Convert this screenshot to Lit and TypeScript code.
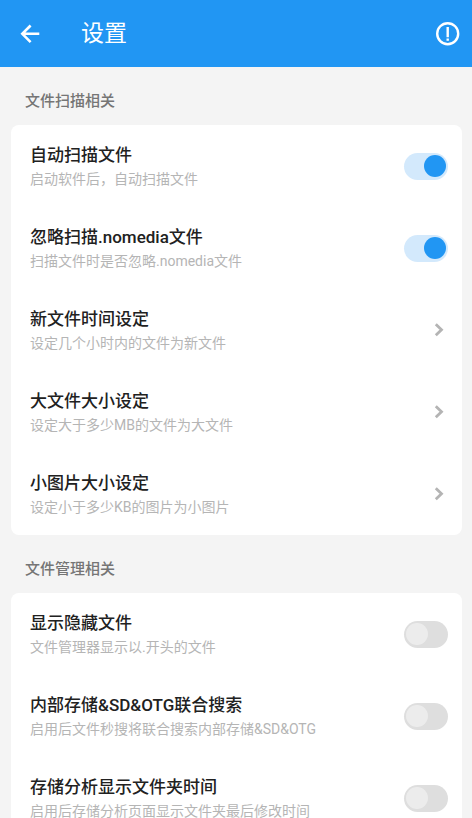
import { LitElement, html, css } from "lit";
import { customElement, property, state } from "lit/decorators.js";

interface Setting {
  id: string;
  title: string;
  hint: string;
  on?: boolean;
}

interface Section {
  heading: string;
  items: Setting[];
}

const initialSections: Section[] = [
  {
    heading: "文件扫描相关",
    items: [
      { id: "auto-scan", title: "自动扫描文件", hint: "启动软件后，自动扫描文件", on: true },
      { id: "nomedia", title: "忽略扫描.nomedia文件", hint: "扫描文件时是否忽略.nomedia文件", on: true },
      { id: "new-time", title: "新文件时间设定", hint: "设定几个小时内的文件为新文件" },
      { id: "big-size", title: "大文件大小设定", hint: "设定大于多少MB的文件为大文件" },
      { id: "small-image", title: "小图片大小设定", hint: "设定小于多少KB的图片为小图片" },
    ],
  },
  {
    heading: "文件管理相关",
    items: [
      { id: "hidden", title: "显示隐藏文件", hint: "文件管理器显示以.开头的文件", on: false },
      { id: "joint-search", title: "内部存储&SD&OTG联合搜索", hint: "启用后文件秒搜将联合搜索内部存储&SD&OTG", on: false },
      { id: "folder-time", title: "存储分析显示文件夹时间", hint: "启用后存储分析页面显示文件夹最后修改时间", on: false },
    ],
  },
];

@customElement("setting-row")
export class SettingRow extends LitElement {
  @property({ attribute: false }) setting!: Setting;

  static styles = css`
    :host {
      display: block;
    }
    .row {
      box-sizing: border-box;
      display: flex;
      align-items: center;
      gap: 16px;
      width: 100%;
      margin: 0;
      padding: 16px 14px 16px 19px;
      border: 0;
      background: none;
      font: inherit;
      text-align: left;
      cursor: pointer;
    }
    .text {
      flex: 1;
      min-width: 0;
      padding-top: 2px;
    }
    .title,
    .hint {
      display: block;
      line-height: 24px;
    }
    .title {
      color: #212121;
      font-size: 17px;
      font-weight: 500;
    }
    .hint {
      color: #b5b5b5;
      font-size: 14px;
    }
    .switch {
      appearance: none;
      flex: none;
      box-sizing: border-box;
      display: flex;
      align-items: center;
      width: 44px;
      height: 27px;
      margin: 0;
      padding: 0 2px;
      border-radius: 14px;
      background: #dedede;
      cursor: pointer;
    }
    .switch::before {
      content: "";
      width: 22px;
      height: 22px;
      border-radius: 50%;
      background: #ececec;
    }
    .switch:checked {
      justify-content: flex-end;
      background: #d3e9fc;
    }
    .switch:checked::before {
      background: #2196f3;
    }
    .chevron {
      flex: none;
      width: 18px;
      height: 18px;
    }
  `;

  private toggle(e: Event) {
    const on = (e.target as HTMLInputElement).checked;
    this.setting = { ...this.setting, on };
  }

  render() {
    const { id, title, hint, on } = this.setting;
    const text = html`<span class="text">
      <span class="title">${title}</span>
      <span class="hint">${hint}</span>
    </span>`;
    if (on === undefined) {
      return html`<button class="row" type="button">
        ${text}
        <svg class="chevron" viewBox="0 0 18 18" aria-hidden="true">
          <path d="M5.8 3.2 L11.5 8.7 L5.8 14.2" fill="none" stroke="#b4b4b4" stroke-width="2.8" />
        </svg>
      </button>`;
    }
    return html`<label class="row" for=${id}>
      ${text}
      <input class="switch" id=${id} type="checkbox" role="switch" .checked=${on} @change=${this.toggle} />
    </label>`;
  }
}

@customElement("app-root")
export class AppRoot extends LitElement {
  @state() private sections = initialSections;

  static styles = css`
    :host {
      display: flex;
      flex-direction: column;
      height: 100vh;
      background: #f4f4f4;
      font-family: Roboto, "Noto Sans CJK SC", sans-serif;
    }
    .bar {
      flex: none;
      display: flex;
      align-items: center;
      gap: 27px;
      padding: 9px 6px;
      background: #2196f3;
      color: #fff;
    }
    .icon-button {
      flex: none;
      display: grid;
      place-items: center;
      width: 48px;
      height: 48px;
      margin: 0;
      padding: 0;
      border: 0;
      background: none;
      color: inherit;
      cursor: pointer;
    }
    .icon-button.info {
      width: 36px;
    }
    .icon {
      width: 24px;
      height: 24px;
    }
    .page-title {
      flex: 1;
      margin: 0;
      font-size: 23px;
      font-weight: 400;
      line-height: 49px;
    }
    .content {
      flex: 1;
      min-height: 0;
      overflow-y: auto;
      scrollbar-width: none;
    }
    .heading {
      margin: 0;
      padding: 22px 25px 12px;
      color: #757575;
      font-size: 15px;
      font-weight: 500;
      line-height: 24px;
    }
    .card {
      margin: 0 10px 0 11px;
      border-radius: 8px;
      background: #fff;
    }
  `;

  render() {
    return html`
      <header class="bar">
        <button class="icon-button" type="button" aria-label="返回">
          <svg class="icon" viewBox="0 0 24 24" fill="none" stroke="currentColor" stroke-width="2.6" aria-hidden="true">
            <path d="M21.3 11.8H4.5M12.6 3.5L4.3 11.8L12.6 20.1" />
          </svg>
        </button>
        <h1 class="page-title">设置</h1>
        <button class="icon-button info" type="button" aria-label="说明">
          <svg class="icon" viewBox="0 0 24 24" fill="none" stroke="currentColor" stroke-width="2.4" aria-hidden="true">
            <circle cx="11.7" cy="11.7" r="10.5" />
            <path d="M11.7 4.9V15.2M11.7 16.5V18.7" />
          </svg>
        </button>
      </header>
      <main class="content">
        ${this.sections.map(
          (s) => html`<section>
            <h2 class="heading">${s.heading}</h2>
            <div class="card">
              ${s.items.map((i) => html`<setting-row .setting=${i}></setting-row>`)}
            </div>
          </section>`
        )}
      </main>
    `;
  }
}
